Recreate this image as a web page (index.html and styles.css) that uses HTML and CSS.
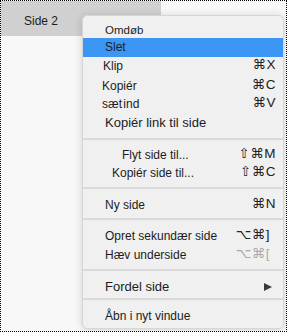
FILE: index.html
```html
<!DOCTYPE html>
<html>
<head>
<meta charset="utf-8">
<link rel="stylesheet" href="styles.css">
</head>
<body>
<div class="frame">
  <div class="tab"><span class="tab-label">Side 2</span></div>
  <div class="menu">
    <div class="item h17 small">Omdøb</div>
    <div class="item active">Slet</div>
    <div class="item"><span class="lbl nudge-l">Klip</span><span class="sc">⌘X</span></div>
    <div class="item h20"><span class="lbl nudge-l2">Kopiér</span><span class="sc">⌘C</span></div>
    <div class="item h17"><span class="lbl nudge-l2 tight">sæt ind</span><span class="sc">⌘V</span></div>
    <div class="item big">Kopiér link til side</div>
    <div class="sep s1"></div>
    <div class="item h18"><span class="lbl ind-flyt">Flyt side til...</span><span class="sc">⇧⌘M</span></div>
    <div class="item"><span class="lbl ind-kop">Kopiér side til...</span><span class="sc">⇧⌘C</span></div>
    <div class="sep s2"></div>
    <div class="item"><span class="lbl">Ny side</span><span class="sc">⌘N</span></div>
    <div class="sep s3"></div>
    <div class="item h20"><span class="lbl">Opret sekundær side</span><span class="sc opt">⌥⌘]</span></div>
    <div class="item"><span class="lbl">Hæv underside</span><span class="sc opt dis">⌥⌘[</span></div>
    <div class="sep s4"></div>
    <div class="item big"><span class="lbl">Fordel side</span><span class="arrow"></span></div>
    <div class="sep s5"></div>
    <div class="item">Åbn i nyt vindue</div>
  </div>
</div>
</body>
</html>
```

FILE: styles.css
```css
html, body {
  margin: 0;
  padding: 0;
}
body {
  font-family: "Liberation Sans", Arial, "DejaVu Sans", sans-serif;
  color: #1c1c1c;
}
.frame {
  position: relative;
  width: 287px;
  height: 332px;
  box-sizing: border-box;
  border: 1px dotted #000;
  background: #f8f8f8;
  overflow: hidden;
}
.tab {
  width: 160px;
  height: 35px;
  background: #d0d0d0;
  display: flex;
  align-items: center;
  padding-left: 23px;
  box-sizing: border-box;
  font-size: 12px;
}
.tab-label {
  padding-top: 5px;
}
.menu {
  position: absolute;
  left: 81px;
  top: 14px;
  width: 202px;
  height: 314px;
  box-sizing: border-box;
  background: #f0f0f0;
  border: 1px solid #d6d6d6;
  border-radius: 5px;
  box-shadow: 0 1px 9px rgba(0, 0, 0, 0.16);
  padding-top: 5px;
  display: flex;
  flex-direction: column;
  overflow: hidden;
}
.item {
  height: 19px;
  line-height: 19px;
  font-size: 12px;
  padding: 0 7px 0 22px;
  display: flex;
  justify-content: space-between;
  align-items: center;
  flex: none;
  white-space: nowrap;
}
.item.h17 { height: 17px; }
.item.h18 { height: 18px; }
.item.h20 { height: 20px; }
.item.small { font-size: 11.5px; line-height: 17px; padding-top: 2px; box-sizing: border-box; }
.item.big { font-size: 13px; }
.item.active {
  background: #3c97f4;
}
.lbl { line-height: 19px; }
.tight { word-spacing: -2px; }
.nudge-l { margin-left: -2px; }
.nudge-l2 { margin-left: -3px; }
.ind-flyt { margin-left: 17px; }
.ind-kop { margin-left: 7px; }
.sc {
  font-size: 13.5px;
  line-height: 15px;
  padding-bottom: 4px;
  color: #222;
  letter-spacing: 0.5px;
}
.sc.opt { margin-right: 6px; }
.sc.dis { color: #a8a8a8; }
.arrow {
  width: 0;
  height: 0;
  border-top: 4.5px solid transparent;
  border-bottom: 4.5px solid transparent;
  border-left: 8px solid #3a3a3a;
  margin-right: 4px;
}
.sep {
  height: 2px;
  background: #dadada;
  flex: none;
}
.s1 { margin: 6px 0 6px; }
.s2 { margin: 4px 0 7px; }
.s3 { margin: 3px 0 6px; }
.s4 { margin: 4px 0 6px; }
.s5 { margin: 2px 0 7px; }
```
